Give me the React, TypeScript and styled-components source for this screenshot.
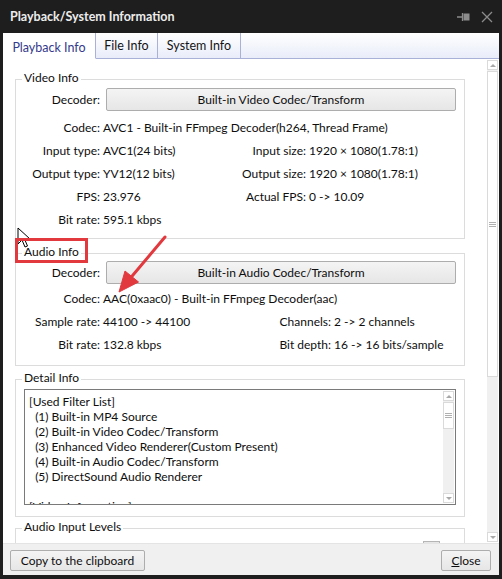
import React from "react";
import styled, { createGlobalStyle } from "styled-components";

const Global = createGlobalStyle`
  html, body { margin: 0; padding: 0; background: #1e1e1e; }
  body {
    font-family: Lato, "Noto Sans", "Liberation Sans", sans-serif;
    font-size: 12px;
    color: #0e0e0e;
  }
  * { box-sizing: border-box; }
`;

const Window = styled.div`
  width: 502px;
  height: 579px;
  background: #1e1e1e;
  display: flex;
  flex-direction: column;
  padding: 0 3px 4px 3px;
  overflow: hidden;
`;

const TitleBar = styled.div`
  height: 33px;
  flex-shrink: 0;
  display: flex;
  align-items: center;
  justify-content: space-between;
  padding: 0 6px 0 7px;
`;

const Title = styled.div`
  color: #ececec;
  font-weight: 700;
  font-size: 12.5px;
`;

const TitleControls = styled.div`
  display: flex;
  align-items: center;
  gap: 11px;
`;

const TabBar = styled.div`
  height: 26px;
  flex-shrink: 0;
  display: flex;
  background: linear-gradient(#ffffff, #e8ecf9);
`;

const Tab = styled.div<{ $w: number; $active?: boolean }>`
  width: ${(p) => p.$w}px;
  display: flex;
  align-items: center;
  justify-content: center;
  border-right: 1px solid #aab1d8;
  border-bottom: 1px solid ${(p) => (p.$active ? "transparent" : "#aab1d8")};
  background: ${(p) => (p.$active ? "#ffffff" : "transparent")};
  color: ${(p) => (p.$active ? "#343a8c" : "#141414")};
  font-size: 12.5px;
  padding-top: ${(p) => (p.$active ? "3px" : "0")};
`;

const TabFiller = styled.div`
  flex: 1;
  border-bottom: 1px solid #aab1d8;
`;

const Content = styled.div`
  flex: 1;
  position: relative;
  display: flex;
  background: #ffffff;
  overflow: hidden;
`;

const MainColumn = styled.div`
  flex: 1;
  display: flex;
  flex-direction: column;
  padding: 20px 0 0 12px;
  overflow: hidden;
`;

const Group = styled.div<{ $h: number; $mt: number; $pt: number }>`
  position: relative;
  width: 450px;
  height: ${(p) => p.$h}px;
  margin-top: ${(p) => p.$mt}px;
  padding-top: ${(p) => p.$pt}px;
  border: 1px solid #dcdcdc;
  flex-shrink: 0;
`;

const Legend = styled.span`
  position: absolute;
  top: -10px;
  left: 6px;
  padding: 0 2px;
  line-height: 16px;
  background: #ffffff;
`;

const DecoderRow = styled.div<{ $mb: number }>`
  display: flex;
  align-items: center;
  gap: 6px;
  height: 23px;
  margin-bottom: ${(p) => p.$mb}px;
`;

const RowLabel = styled.div`
  width: 84px;
  text-align: right;
  white-space: nowrap;
`;

const PushButton = styled.div<{ $w?: number }>`
  height: ${(p) => (p.$w ? 21 : 23)}px;
  ${(p) => (p.$w ? `width: ${p.$w}px;` : "flex: 1; margin-right: 8px;")}
  display: flex;
  align-items: center;
  justify-content: center;
  border: 1px solid #adadad;
  border-radius: 2px;
  background: linear-gradient(#f4f4f4, #e6e6e6);
  white-space: nowrap;
`;

const InfoGrid = styled.div<{ $v1: number }>`
  display: grid;
  grid-template-columns: 84px ${(p) => p.$v1}px 70px 1fr;
  column-gap: 3px;
  grid-auto-rows: 23px;
  align-items: center;
  white-space: nowrap;
`;

const Label = styled.div`
  text-align: right;
`;

const Value = styled.div<{ $span?: boolean }>`
  ${(p) => (p.$span ? "grid-column: 2 / span 3;" : "")}
`;

const TextBox = styled.div`
  margin: 0 8px;
  height: 116px;
  border: 1px solid #7a7a7a;
  display: flex;
  overflow: hidden;
`;

const TextLines = styled.div`
  flex: 1;
  padding: 4px 0 0 4px;
  line-height: 15px;
  white-space: pre;
  overflow: hidden;
`;

const VScroll = styled.div<{ $w: number; $m: number }>`
  width: ${(p) => p.$w}px;
  flex-shrink: 0;
  display: flex;
  flex-direction: column;
  gap: 1px;
  background: #f0f0f0;
  margin: ${(p) => p.$m}px ${(p) => p.$m}px ${(p) => p.$m}px 0;
`;

const ScrollPiece = styled.div<{ $h: number }>`
  height: ${(p) => p.$h}px;
  flex-shrink: 0;
  background: #ffffff;
  border: 1px solid #dadada;
  display: flex;
  align-items: center;
  justify-content: center;
`;

const Track = styled.div`
  flex: 1;
`;

const Tri = styled.div<{ $down?: boolean }>`
  width: 0;
  height: 0;
  border-left: 3px solid transparent;
  border-right: 3px solid transparent;
  ${(p) =>
    p.$down
      ? "border-top: 3px solid #a8a8a8;"
      : "border-bottom: 3px solid #a8a8a8;"}
`;

const LevelThumb = styled.div`
  margin-left: 407px;
  width: 17px;
  height: 12px;
  border: 1px solid #b5b5b5;
  background: #e6e6e6;
`;

const Footer = styled.div`
  height: 32px;
  flex-shrink: 0;
  display: flex;
  align-items: center;
  justify-content: space-between;
  padding: 2px 8px 0 7px;
  background: #f0f0f0;
  border-top: 1px solid #e4e4e4;
`;

const Overlay = styled.svg`
  position: absolute;
  left: 0;
  top: 0;
  width: 100%;
  height: 100%;
  pointer-events: none;
`;

const Grip = () => (
  <svg width="7" height="5" viewBox="0 0 7 5">
    <path d="M0 0.5H7M0 2.5H7M0 4.5H7" stroke="#b0b0b0" strokeWidth="1" />
  </svg>
);

const Scrollbar = ({ w, m, thumb }: { w: number; m: number; thumb: number }) => (
  <VScroll $w={w} $m={m}>
    <ScrollPiece $h={10}>
      <Tri />
    </ScrollPiece>
    <ScrollPiece $h={thumb}>
      <Grip />
    </ScrollPiece>
    <Track />
    <ScrollPiece $h={10}>
      <Tri $down />
    </ScrollPiece>
  </VScroll>
);

const detailText = [
  "[Used Filter List]",
  "  (1) Built-in MP4 Source",
  "  (2) Built-in Video Codec/Transform",
  "  (3) Enhanced Video Renderer(Custom Present)",
  "  (4) Built-in Audio Codec/Transform",
  "  (5) DirectSound Audio Renderer",
  " ",
  "[Video Information]",
  "  Codec: AVC1",
].join("\n");

export default function App() {
  return (
    <>
      <Global />
      <Window>
        <TitleBar>
          <Title>Playback/System Information</Title>
          <TitleControls>
            <svg width="13" height="10" viewBox="0 0 13 10">
              <path d="M0 5H5M5.5 1V9" stroke="#8c8c8c" strokeWidth="1.3" />
              <rect x="6.5" y="1.5" width="6" height="7" fill="#8c8c8c" />
            </svg>
            <svg width="12" height="12" viewBox="0 0 12 12">
              <path d="M1 1L11 11M11 1L1 11" stroke="#8c8c8c" strokeWidth="1.3" />
            </svg>
          </TitleControls>
        </TitleBar>
        <TabBar>
          <Tab $w={93} $active>
            Playback Info
          </Tab>
          <Tab $w={62}>File Info</Tab>
          <Tab $w={83}>System Info</Tab>
          <TabFiller />
        </TabBar>
        <Content>
          <MainColumn>
            <Group $h={160} $mt={0} $pt={8}>
              <Legend>Video Info</Legend>
              <DecoderRow $mb={5}>
                <RowLabel>Decoder:</RowLabel>
                <PushButton>Built-in Video Codec/Transform</PushButton>
              </DecoderRow>
              <InfoGrid $v1={130}>
                <Label>Codec:</Label>
                <Value $span>AVC1 - Built-in FFmpeg Decoder(h264, Thread Frame)</Value>
                <Label>Input type:</Label>
                <Value>AVC1(24 bits)</Value>
                <Label>Input size:</Label>
                <Value>1920 × 1080(1.78:1)</Value>
                <Label>Output type:</Label>
                <Value>YV12(12 bits)</Value>
                <Label>Output size:</Label>
                <Value>1920 × 1080(1.78:1)</Value>
                <Label>FPS:</Label>
                <Value>23.976</Value>
                <Label>Actual FPS:</Label>
                <Value>0 -&gt; 10.09</Value>
                <Label>Bit rate:</Label>
                <Value>595.1 kbps</Value>
              </InfoGrid>
            </Group>
            <Group $h={113} $mt={14} $pt={7}>
              <Legend>Audio Info</Legend>
              <DecoderRow $mb={3}>
                <RowLabel>Decoder:</RowLabel>
                <PushButton>Built-in Audio Codec/Transform</PushButton>
              </DecoderRow>
              <InfoGrid $v1={155}>
                <Label>Codec:</Label>
                <Value $span>AAC(0xaac0) - Built-in FFmpeg Decoder(aac)</Value>
                <Label>Sample rate:</Label>
                <Value>44100 -&gt; 44100</Value>
                <Label>Channels:</Label>
                <Value>2 -&gt; 2 channels</Value>
                <Label>Bit rate:</Label>
                <Value>132.8 kbps</Value>
                <Label>Bit depth:</Label>
                <Value>16 -&gt; 16 bits/sample</Value>
              </InfoGrid>
            </Group>
            <Group $h={138} $mt={13} $pt={9}>
              <Legend>Detail Info</Legend>
              <TextBox>
                <TextLines>{detailText}</TextLines>
                <Scrollbar w={11} m={1} thumb={27} />
              </TextBox>
            </Group>
            <Group $h={60} $mt={11} $pt={12}>
              <Legend>Audio Input Levels</Legend>
              <LevelThumb />
            </Group>
          </MainColumn>
          <Scrollbar w={11} m={1} thumb={306} />
          <Overlay viewBox="0 0 496 484">
            <path
              d="M15 169 L15 185 L19 181 L22 188 L24.5 187 L21.5 180 L27 180 Z"
              fill="#ffffff"
              stroke="#000000"
              strokeWidth="1"
              strokeLinejoin="round"
            />
            <rect x="13.5" y="180.5" width="70" height="22" fill="none" stroke="#e2393f" strokeWidth="3" />
            <path d="M162 178 L127.5 219" stroke="#e2393f" strokeWidth="3" strokeLinecap="round" />
            <path d="M116 233 L135.5 223 L122 212 Z" fill="#e2393f" stroke="#e2393f" strokeWidth="1" strokeLinejoin="round" />
          </Overlay>
        </Content>
        <Footer>
          <PushButton $w={135}>Copy to the clipboard</PushButton>
          <PushButton $w={50}>
            <span>
              <u>C</u>lose
            </span>
          </PushButton>
        </Footer>
      </Window>
    </>
  );
}
